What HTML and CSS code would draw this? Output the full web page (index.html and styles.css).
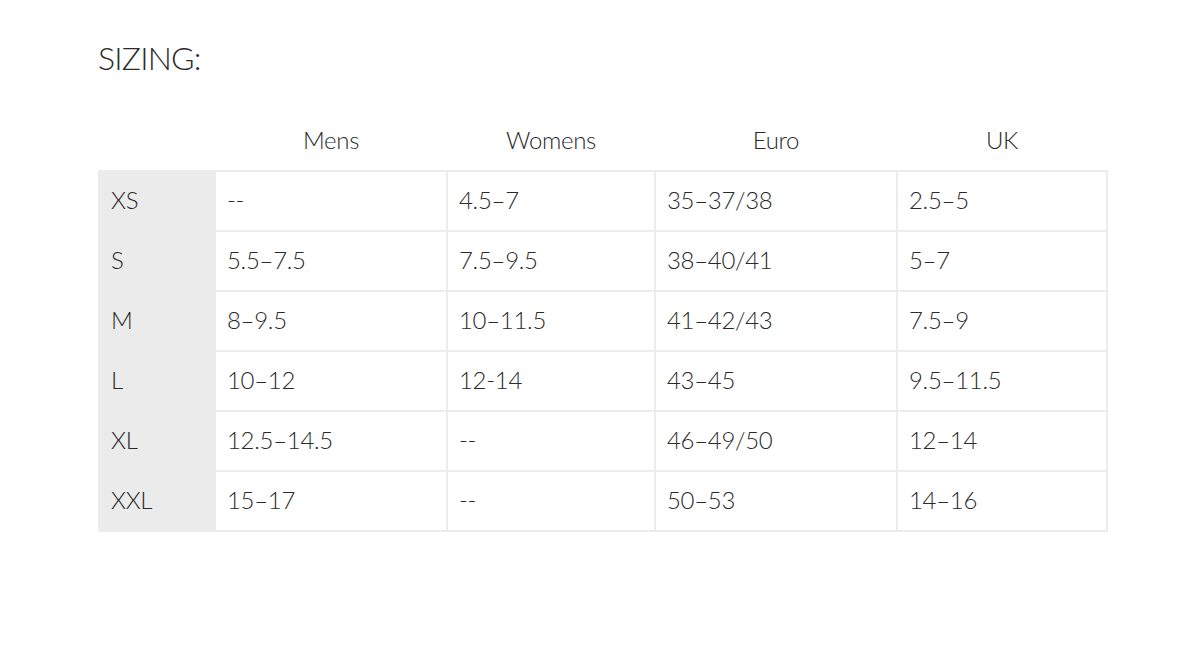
FILE: index.html
```html
<!DOCTYPE html>
<html>
<head>
<meta charset="utf-8">
<link rel="stylesheet" href="styles.css">
</head>
<body>
<div class="page">
  <h1 class="title">SIZING:</h1>
  <table class="sizes">
    <colgroup>
      <col class="c0"><col class="c1"><col class="c2"><col class="c3"><col class="c4">
    </colgroup>
    <thead>
      <tr><th></th><th>Mens</th><th>Womens</th><th>Euro</th><th>UK</th></tr>
    </thead>
    <tbody>
      <tr><td class="lbl">XS</td><td>--</td><td>4.5–7</td><td>35–37/38</td><td>2.5–5</td></tr>
      <tr><td class="lbl">S</td><td>5.5–7.5</td><td>7.5–9.5</td><td>38–40/41</td><td>5–7</td></tr>
      <tr><td class="lbl">M</td><td>8–9.5</td><td>10–11.5</td><td>41–42/43</td><td>7.5–9</td></tr>
      <tr><td class="lbl">L</td><td>10–12</td><td>12-14</td><td>43–45</td><td>9.5–11.5</td></tr>
      <tr><td class="lbl">XL</td><td>12.5–14.5</td><td>--</td><td>46–49/50</td><td>12–14</td></tr>
      <tr><td class="lbl">XXL</td><td>15–17</td><td>--</td><td>50–53</td><td>14–16</td></tr>
    </tbody>
  </table>
</div>
</body>
</html>
```
FILE: styles.css
```css
html, body {
  margin: 0;
  padding: 0;
  background: #fff;
}
body {
  font-family: "Lato", "Liberation Sans", sans-serif;
  font-weight: 300;
  color: #2a2a2a;
}
.page {
  padding: 36px 0 0 98px;
}
.title {
  margin: 0;
  font-size: 32px;
  font-weight: 300;
  line-height: 44px;
  letter-spacing: -0.8px;
}
.sizes {
  margin-top: 35px;
  border-collapse: collapse;
  width: 1008px;
  table-layout: fixed;
  font-size: 24px;
  letter-spacing: -0.3px;
}
.c0 { width: 116px; }
.c1 { width: 232px; }
.c2 { width: 208px; }
.c3 { width: 242px; }
.c4 { width: 210px; }
.sizes th {
  font-weight: 300;
  height: 49px;
  padding: 0 0 6px 0;
  text-align: center;
  vertical-align: middle;
}
.sizes td {
  height: 54px;
  padding: 0 0 4px 11px;
  border: 2px solid #ececec;
  vertical-align: middle;
  text-align: left;
}
.sizes td.lbl {
  background: #ebebeb;
}
```
